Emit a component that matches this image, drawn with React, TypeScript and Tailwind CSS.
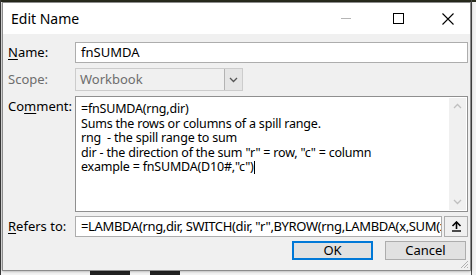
import React from "react";

const font = { fontFamily: '"Noto Sans", "Open Sans", sans-serif' };

function Label({ children, gray }: { children: React.ReactNode; gray?: boolean }) {
  return (
    <div
      className={`w-[72px] shrink-0 pl-[5px] text-[13px] leading-[21px] ${gray ? "text-[#6d6d6d]" : "text-black"}`}
    >
      {children}
    </div>
  );
}

export default function App() {
  return (
    <div className="relative w-[476px] h-[275px] overflow-hidden bg-[#f4f4f4]" style={font}>
      {/* background sheet fragments */}
      <div className="absolute left-0 top-0 w-[476px] h-[2px] bg-[#2a2d1f]" />
      <div className="absolute left-0 top-0 w-[1px] h-[275px] bg-[#3a3a3a]" />
      <div className="absolute left-[471px] top-0 w-[1px] h-[275px] bg-[#4a4a4a]" />
      <div className="absolute left-[90px] top-[271px] w-[40px] h-[4px] bg-[#222]" />
      <div className="absolute left-[150px] top-[271px] w-[30px] h-[4px] bg-[#222]" />

      <div className="absolute left-[2px] top-[2px] w-[469px] h-[269px] border border-[#8c8c8c] bg-[#f0f0f0] flex flex-col shadow-[0_0_3px_rgba(0,0,0,0.4)]">
        {/* title bar */}
        <div className="h-[31px] bg-white flex items-center shrink-0">
          <div className="pl-[8px] text-[14px] text-black flex-1">Edit Name</div>
          <div className="flex items-center h-full">
            <div className="w-[46px] h-full flex items-center justify-center">
              <div className="w-[10px] h-[1px] bg-[#b5b5b5]" />
            </div>
            <div className="w-[46px] h-full flex items-center justify-center ml-[6px]">
              <div className="w-[11px] h-[11px] border border-black" />
            </div>
            <div className="w-[44px] h-full flex items-center justify-center ml-[5px]">
              <svg width="12" height="12" viewBox="0 0 12 12">
                <path d="M0.5 0.5 L11.5 11.5 M11.5 0.5 L0.5 11.5" stroke="black" strokeWidth="1.1" />
              </svg>
            </div>
          </div>
        </div>

        {/* body */}
        <div className="flex flex-col pt-[8px] pr-[2px]">
          {/* Name */}
          <div className="flex items-center h-[21px]">
            <Label>
              <span className="underline underline-offset-2">N</span>ame:
            </Label>
            <div className="flex-1 h-[21px] bg-white border border-[#adadad] flex items-center pl-[5px] text-[13px] text-black">
              fnSUMDA
            </div>
          </div>

          {/* Scope */}
          <div className="flex items-center h-[23px] mt-[5px]">
            <Label gray>Scope:</Label>
            <div className="w-[168px] h-[23px] bg-[#f0f0f0] border border-[#cccccc] flex">
              <div className="flex-1 flex items-center pl-[4px] text-[13px] text-[#6d6d6d]">Workbook</div>
              <div className="w-[18px] h-full border-l border-[#b3b3b3] bg-[#e5e5e5] flex items-center justify-center">
                <svg width="9" height="6" viewBox="0 0 9 6">
                  <path d="M1 1 L4.5 4.5 L8 1" stroke="#555" strokeWidth="1.3" fill="none" />
                </svg>
              </div>
            </div>
          </div>

          {/* Comment */}
          <div className="flex items-start h-[116px] mt-[5px]">
            <Label>
              Co<span className="underline underline-offset-2">m</span>ment:
            </Label>
            <div className="flex-1 h-[116px] bg-white border border-[#8f8f8f] flex p-[1px]">
              <div className="flex-1 pl-[4px] pt-[4px] text-[12.5px] leading-[14.5px] text-black whitespace-pre tracking-[-0.2px]">
                {"=fnSUMDA(rng,dir)\nSums the rows or columns of a spill range.\nrng  - the spill range to sum\ndir - the direction of the sum \"r\" = row, \"c\" = column\nexample = fnSUMDA(D10#,\"c\")"}
                <span className="inline-block w-[1px] h-[13px] bg-black align-middle" />
              </div>
              <div className="w-[17px] h-full bg-[#f0f0f0] flex flex-col justify-between items-center py-[5px]">
                <svg width="9" height="6" viewBox="0 0 9 6">
                  <path d="M1 5 L4.5 1.5 L8 5" stroke="#bfbfbf" strokeWidth="1.3" fill="none" />
                </svg>
                <svg width="9" height="6" viewBox="0 0 9 6">
                  <path d="M1 1 L4.5 4.5 L8 1" stroke="#bfbfbf" strokeWidth="1.3" fill="none" />
                </svg>
              </div>
            </div>
          </div>

          {/* Refers to */}
          <div className="flex items-center h-[21px] mt-[4px]">
            <Label>
              <span className="underline underline-offset-2">R</span>efers to:
            </Label>
            <div className="w-[367px] h-[21px] bg-white border border-[#adadad] overflow-hidden flex items-center pl-[5px] text-[13px] text-black whitespace-nowrap tracking-[-0.35px]">
              {"=LAMBDA(rng,dir, SWITCH(dir, \"r\",BYROW(rng,LAMBDA(x,SUM(x),\"c\",BYCOL(rng"}
            </div>
            <div className="ml-[2px] w-[24px] h-[21px] bg-[#f0f0f0] border border-[#adadad] flex items-center justify-center">
              <svg width="11" height="11" viewBox="0 0 11 11">
                <path d="M5.5 1 L5.5 8" stroke="black" strokeWidth="1.6" />
                <path d="M1.5 5 L5.5 1 L9.5 5" stroke="black" strokeWidth="1.6" fill="none" />
                <path d="M1 10 L10 10" stroke="black" strokeWidth="1.4" />
              </svg>
            </div>
          </div>

          {/* buttons */}
          <div className="flex justify-end mt-[4px] pr-[2px] gap-[12px]">
            <div className="w-[81px] h-[19px] bg-[#e1e1e1] border-2 border-[#0078d7] flex items-center justify-center text-[13px] text-black">
              OK
            </div>
            <div className="w-[81px] h-[19px] bg-[#e1e1e1] border border-[#adadad] flex items-center justify-center text-[13px] text-black">
              Cancel
            </div>
          </div>
        </div>

        {/* resize grip */}
        <svg className="absolute right-[1px] bottom-[1px]" width="10" height="10" viewBox="0 0 10 10">
          <path d="M9 2 L2 9 M9 5 L5 9 M9 8 L8 9" stroke="#b0b0b0" strokeWidth="1" />
        </svg>
      </div>
    </div>
  );
}
